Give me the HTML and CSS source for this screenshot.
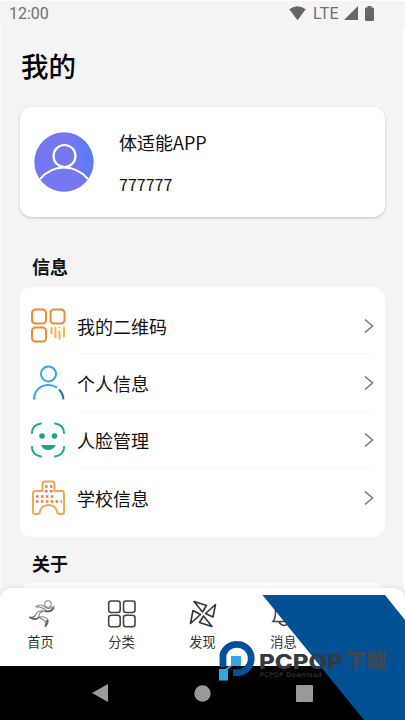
FILE: index.html
```
<!DOCTYPE html>
<html lang="zh-CN">
<head>
<meta charset="utf-8">
<title>我的</title>
<link rel="stylesheet" href="styles.css">
</head>
<body>
<div class="phone">
  <header class="status">
    <span class="clock">12:00</span>
    <svg class="wifi" width="17" height="15" viewBox="0 0 17 15"><path d="M.3 3.3Q8.500-2.700 16.700 3.300L8.500 14.300Z"/></svg>
    <span class="lte">LTE</span>
    <svg class="signal" width="14" height="14" viewBox="0 0 14 14"><path d="M14 0V14H0Z"/></svg>
    <svg class="battery" width="9" height="15" viewBox="0 0 9 15"><path d="M2.500 0h4v1.500H8q1 0 1 1V14q0 1-1 1H1q-1 0-1-1V2.500q0-1 1-1h1.500z"/></svg>
  </header>
  <main class="content">
    <h1>我的</h1>
    <section class="profile">
      <svg class="avatar" width="60" height="60" viewBox="0 0 60 60">
        <defs>
          <linearGradient id="face" x1="0" y1=".6" x2="1" y2=".4"><stop offset="0" stop-color="#7178f5"/><stop offset=".6" stop-color="#7777ec"/><stop offset="1" stop-color="#557cff"/></linearGradient>
        </defs>
        <circle cx="30" cy="30" r="29.700" fill="url(#face)"/>
        <g fill="none" stroke="#fff" stroke-width="2.200"><circle cx="30.500" cy="24" r="11"/><path d="M6 47Q16 35.500 30 35.500T54 47"/></g>
      </svg>
      <div class="who"><div class="name">体适能APP</div><div class="number">777777</div></div>
    </section>
    <h2>信息</h2>
    <section class="list">
      <div class="row">
        <svg class="icon" width="36" height="36" viewBox="0 0 36 36" fill="none" stroke="#f28a35" stroke-width="2">
          <rect x="2" y="1.500" width="14" height="14" rx="3.500"/><rect x="20.500" y="1.500" width="14" height="14" rx="3.500"/><rect x="2" y="19.500" width="14" height="14" rx="3.500"/>
          <path d="M21.500 19v7M25.500 19v11M29.500 19v1.500M29.500 22.500v9M34 19v10" stroke="#f5b34c"/>
        </svg>
        <span>我的二维码</span><svg class="chevron" width="10" height="16" viewBox="0 0 10 16"><path d="M1 1.500 8.500 8 1 14.500"/></svg>
      </div>
      <div class="row">
        <svg class="icon" width="36" height="36" viewBox="0 0 36 36" fill="none" stroke="#36a8df" stroke-width="2">
          <circle cx="18.500" cy="9" r="7.500"/><path d="M4 34.500C4 25 11 20 18.500 20q5 0 8.500 2.500"/><path d="M29 24.500q4 4 4.500 10" stroke="#1773ad"/>
        </svg>
        <span>个人信息</span><svg class="chevron" width="10" height="16" viewBox="0 0 10 16"><path d="M1 1.500 8.500 8 1 14.500"/></svg>
      </div>
      <div class="row">
        <svg class="icon" width="36" height="36" viewBox="0 0 36 36" fill="none" stroke="#22a88f" stroke-width="2" stroke-linecap="round">
          <path d="M2 11Q2 3 11 1.500M25 1.500Q34 3 34 11M34 25q0 8-9 9.500M11 34.500Q2 33 2 25"/>
          <g fill="#19a58d" stroke="none"><circle cx="12" cy="14" r="2.800"/><circle cx="24.500" cy="14" r="2.800"/><path d="M11 23h14.500q-2 5-7.250 5T11 23z"/></g>
        </svg>
        <span>人脸管理</span><svg class="chevron" width="10" height="16" viewBox="0 0 10 16"><path d="M1 1.500 8.500 8 1 14.500"/></svg>
      </div>
      <div class="row">
        <svg class="icon" width="36" height="36" viewBox="0 0 36 36">
          <path d="M12.500 11V4q0-2.500 2.500-2.500h7Q24.500 1.500 24.500 4v7H32q2 0 2 2.500V32q0 2-2 2h-2.500q-2 0-2.500-2.500-1.500-6.500-8.500-6.500T10 31.500Q9.500 34 7.500 34H5q-2 0-2-2V13.500Q3 11 5 11z" fill="none" stroke="#efaa50" stroke-width="2"/>
          <g fill="none" stroke="#e77a53" stroke-width="2.600" stroke-dasharray="2.600 2.300"><path d="M15 6.500h7.500M15 11.200h7.500M6 16.500h17.500M6 21.500h26"/></g>
        </svg>
        <span>学校信息</span><svg class="chevron" width="10" height="16" viewBox="0 0 10 16"><path d="M1 1.500 8.500 8 1 14.500"/></svg>
      </div>
    </section>
    <h2 class="about">关于</h2>
    <div class="next-card"></div>
  </main>
  <nav class="tabs">
    <div class="tab">
      <svg width="30" height="30" viewBox="0 0 30 30" fill="none" stroke="#888" stroke-width="1.100"><circle cx="22" cy="5" r="3.300"/><path d="M9.500 8q5-4 9.500 0 4 3 9-.5-1 6-7 4.500Q15 7 9.500 8z"/><path d="M19 12q-7 1-6 6-3 5-10 0 6 1 7-3 2-4 9-3M13 18q7-1 9 3 1 3-3 7 2-5-1-7-3-1-5-3z"/><path d="M19 12q5 2 8.500-3M4 18.500q7 3 9-.5M21 21q1 3-2 6" stroke="#555" stroke-width="1.500"/></svg><span>首页</span>
    </div>
    <div class="tab">
      <svg width="30" height="30" viewBox="0 0 30 30" fill="none" stroke="#444" stroke-width="1.600"><rect x="1.700" y="2" width="11.500" height="11.500" rx="2.500"/><rect x="16.500" y="2" width="11.500" height="11.500" rx="2.500"/><rect x="1.700" y="16.300" width="11.500" height="11.500" rx="2.500"/><rect x="16.500" y="16.300" width="11.500" height="11.500" rx="2.500"/></svg><span>分类</span>
    </div>
    <div class="tab">
      <svg width="30" height="30" viewBox="0 0 30 30" fill="none" stroke="#333" stroke-width="1.600" stroke-linejoin="round"><path d="M6 2.500 18.500 6.500 14.500 13zM27.500 5.500 25 18 17.500 14.500zM24 27.500 11.500 23.500 15.500 17zM2.500 24.500 5 11.500 12.500 15.500z"/></svg><span>发现</span>
    </div>
    <div class="tab">
      <svg width="30" height="30" viewBox="0 0 30 30" fill="none" stroke="#444" stroke-width="1.500"><path d="M4 22.500Q6.500 20 6.500 12 6.500 4 15 4t8.500 8q0 8 2.500 10.500z"/><path d="M10 23q5 7 10 0"/></svg><span>消息</span>
    </div>
    <div class="tab"></div>
  </nav>
  <footer class="system">
    <svg width="17" height="20" viewBox="0 0 17 20"><path d="M16 1v18L0 10z"/></svg>
    <svg width="17" height="17" viewBox="0 0 17 17"><circle cx="8.500" cy="8.500" r="8.200"/></svg>
    <svg width="17" height="17" viewBox="0 0 17 17"><rect width="17" height="17" rx="1"/></svg>
  </footer>
  <svg class="brand" width="405" height="125" viewBox="0 0 405 125">
    <path d="M262.500 0H385l20 25v100H364z" fill="#025096"/>
    <path d="M223 72V59.500A14.200 14.200 0 0 1 237 49.300A14.200 14.200 0 0 1 251.200 63.500A14.200 14.200 0 0 1 237 77.700H233" fill="none" stroke="#02509a" stroke-width="6.800"/>
    <path d="M231 61h10v11h-8.500v13.500H220V74h8v-3h3z" fill="none"/>
    <path d="M231 61h10v10h-9l-4 3.500v11h-9V74h6l6-4z" fill="#36a5e0"/>
    <text class="wordmark" x="259" y="73.500" textLength="84" lengthAdjust="spacingAndGlyphs">PCPOP</text>
    <text class="download" x="345" y="73" textLength="42" lengthAdjust="spacingAndGlyphs">下载</text>
    <text class="caption" x="260" y="81.500" textLength="61.500">PCPOP Download</text>
  </svg>
</div>
</body>
</html>
```

FILE: styles.css
```
* { box-sizing: border-box; }
body {
  margin: 0;
  background: #f4f4f4;
  color: #111;
  font-family: "Noto Sans CJK SC", sans-serif;
}
.phone {
  position: relative;
  width: 405px;
  height: 720px;
  overflow: hidden;
  display: flex;
  flex-direction: column;
  box-shadow: inset 0 1px #fcfcfc;
}
.phone svg { flex: none; display: block; }
.status {
  height: 26px;
  padding: 2px 31px 0 9px;
  display: flex;
  align-items: center;
  color: #707070;
  font: 16px/24px Roboto, sans-serif;
}
.status svg { fill: #666; margin-top: -2px; }
.clock { margin-right: auto; }
.lte { margin: 0 5px 0 7px; letter-spacing: 0.3px; }
.battery { margin-left: 7px; }
.content {
  height: 562px;
  overflow: hidden;
  border: solid #fafafa;
  border-width: 0 2px;
  padding: 0 18px;
}
h1 {
  margin: 18px 0 0 1px;
  font-size: 27.5px;
  line-height: 42px;
  font-weight: 500;
  color: #000;
}
.profile {
  height: 110px;
  margin-top: 21px;
  padding-left: 14px;
  display: flex;
  align-items: center;
  border-radius: 12px;
  background: #fff;
  box-shadow: 0 1px 3px #0003;
}
.who {
  margin-left: 25px;
  display: grid;
  gap: 17px;
}
.name { font-size: 18px; line-height: 26px; }
.number { font-size: 16px; line-height: 24px; }
h2 {
  margin: 35px 0 0 12px;
  font-size: 18px;
  line-height: 28px;
  font-weight: 700;
}
.list {
  height: 250px;
  margin-top: 7px;
  padding: 10px 11px 0 10px;
  border-radius: 12px;
  background: #fff;
}
.row {
  height: 57.3px;
  display: flex;
  align-items: center;
  font-size: 18px;
  line-height: 26px;
}
.row:not(:last-child) {
  background: linear-gradient(#f7f7f7, #f7f7f7) 47px 100% / 100% 1px no-repeat;
}
.row span { margin-left: 11px; }
.chevron {
  margin-left: auto;
  fill: none;
  stroke: #777;
  stroke-width: 1.5;
}
h2.about { margin-top: 12px; }
.next-card { height: 20px; margin-top: 6px; border-radius: 12px; background: #fff; }
.tabs {
  height: 78px;
  padding-top: 11px;
  display: flex;
  border-radius: 12px 12px 0 0;
  background: #fff;
  box-shadow: 0 -1px 4px #00000018;
}
.tab {
  flex: 1;
  display: flex;
  flex-direction: column;
  align-items: center;
  font-size: 13.2px;
  line-height: 20px;
  color: #333;
}
.tab span { margin-top: 3px; }
.system {
  height: 54px;
  padding: 0 92px;
  display: flex;
  align-items: center;
  justify-content: space-between;
  background: #000;
}
.system svg { fill: #999; }
.brand { position: absolute; left: 0; bottom: 0; }
.wordmark { font: 800 19.5px Inter, sans-serif; fill: #343a40; }
.download { font: 800 20px "Noto Sans CJK SC", sans-serif; fill: #3d4853; }
.caption { font: 6.5px "DejaVu Sans", sans-serif; fill: #444; }
```
